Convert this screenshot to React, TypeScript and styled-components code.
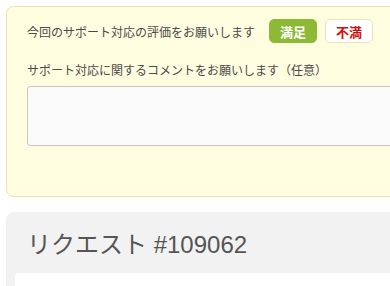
import styled, { createGlobalStyle } from "styled-components";

const GlobalStyle = createGlobalStyle`
  body {
    margin: 0;
    background: #ffffff;
    font-family: "Liberation Sans", "Noto Sans CJK JP", sans-serif;
  }
`;

const App = () => {
  return (
    <Viewport>
      <GlobalStyle />
      <Page>
        <SurveyPanel>
          <RatingRow>
            <Label>今回のサポート対応の評価をお願いします</Label>
            <Buttons>
              <RateButton $good>満足</RateButton>
              <RateButton>不満</RateButton>
            </Buttons>
          </RatingRow>
          <CommentLabel>サポート対応に関するコメントをお願いします（任意）</CommentLabel>
          <Comment />
        </SurveyPanel>
        <RequestPanel>
          <Heading>リクエスト #109062</Heading>
          <RequestBody />
        </RequestPanel>
      </Page>
    </Viewport>
  );
};

export default App;

const Viewport = styled.div`
  width: 100vw;
  height: 100vh;
  overflow: hidden;
`;

const Page = styled.main`
  width: 560px;
  padding: 6px;
  display: flex;
  flex-direction: column;
  gap: 15px;
`;

const SurveyPanel = styled.section`
  background: #fffde0;
  border: 1px solid #ece3a8;
  border-radius: 8px;
  padding: 12px 20px 50px 20px;
`;

const RatingRow = styled.div`
  display: flex;
  align-items: center;
  gap: 14px;
  height: 24px;
`;

const Label = styled.span`
  font-size: 12px;
  color: #4a4a4a;
  font-family: "Noto Sans CJK JP", sans-serif;
`;

const Buttons = styled.div`
  display: flex;
  gap: 8px;
`;

const RateButton = styled.button<{ $good?: boolean }>`
  width: 48px;
  height: 24px;
  border-radius: 5px;
  font-family: "Noto Sans CJK JP", sans-serif;
  font-size: 13px;
  font-weight: 700;
  padding: 0;
  cursor: pointer;
  background: ${(p) => (p.$good ? "#8dba36" : "#ffffff")};
  color: ${(p) => (p.$good ? "#ffffff" : "#cc1111")};
  border: 1px solid ${(p) => (p.$good ? "#8dba36" : "#ebe2b8")};
`;

const CommentLabel = styled.div`
  margin-top: 18px;
  font-size: 12px;
  color: #4a4a4a;
  font-family: "Noto Sans CJK JP", sans-serif;
`;

const Comment = styled.textarea`
  display: block;
  box-sizing: border-box;
  width: 100%;
  height: 60px;
  margin-top: 8px;
  background: #fafafa;
  border: 1px solid #c8c8c8;
  border-radius: 3px;
  resize: none;
`;

const RequestPanel = styled.section`
  background: #f2f2f2;
  border-radius: 8px;
  padding: 15px 9px 0 9px;
  height: 120px;
`;

const Heading = styled.h1`
  margin: 0 0 0 12px;
  font-weight: 400;
  font-size: 24px;
  line-height: 36px;
  color: #555555;
  font-family: "Liberation Sans", "Noto Sans CJK JP", sans-serif;
`;

const RequestBody = styled.div`
  margin-top: 10px;
  background: #ffffff;
  border-radius: 4px;
  height: 80px;
`;
